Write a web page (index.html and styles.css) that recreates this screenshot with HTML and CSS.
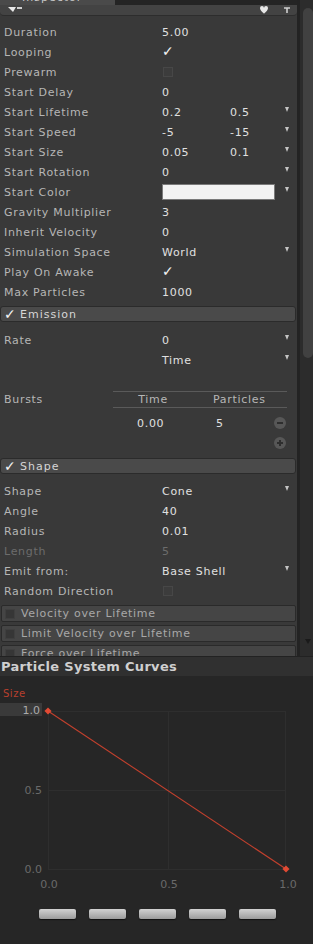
FILE: index.html
```html
<!DOCTYPE html>
<html>
<head>
<meta charset="utf-8">
<link rel="stylesheet" href="styles.css">
</head>
<body>
<div class="inspector">
  <div class="content">
    <div class="tabs"><div class="tab"><span class="tab-text">Inspector</span></div><div class="tab-gap"></div></div>
    <div class="toolbar">
      <svg class="tb-icon-left" width="16" height="8" viewBox="0 0 16 8"><path d="M1 1h8l-3 5z" fill="#e8e8e8"/><rect x="10" y="1" width="5" height="2" fill="#cfcfcf"/></svg>
      <div class="tb-right">
        <svg width="10" height="9" viewBox="0 0 10 9"><path d="M1 2a2 2 0 0 1 4 0a2 2 0 0 1 4 0c0 3-4 5-4 6c0-1-4-3-4-6z" fill="#e6e6e6"/></svg>
        <svg width="8" height="8" viewBox="0 0 8 8"><path d="M1 2h6M4 2v5" stroke="#cfcfcf" stroke-width="1.6"/></svg>
      </div>
    </div>
    <div class="rows">
      <div class="row"><span class="label">Duration</span><span class="val">5.00</span></div>
      <div class="row"><span class="label">Looping</span><span class="check">✓</span></div>
      <div class="row"><span class="label">Prewarm</span><span class="box"></span></div>
      <div class="row"><span class="label">Start Delay</span><span class="val">0</span></div>
      <div class="row"><span class="label">Start Lifetime</span><span class="val">0.2</span><span class="val2">0.5</span><span class="arrow"></span></div>
      <div class="row"><span class="label">Start Speed</span><span class="val">-5</span><span class="val2">-15</span><span class="arrow"></span></div>
      <div class="row"><span class="label">Start Size</span><span class="val">0.05</span><span class="val2">0.1</span><span class="arrow"></span></div>
      <div class="row"><span class="label">Start Rotation</span><span class="val">0</span><span class="arrow"></span></div>
      <div class="row"><span class="label">Start Color</span><span class="swatch"></span><span class="arrow"></span></div>
      <div class="row"><span class="label">Gravity Multiplier</span><span class="val">3</span></div>
      <div class="row"><span class="label">Inherit Velocity</span><span class="val">0</span></div>
      <div class="row"><span class="label">Simulation Space</span><span class="val">World</span><span class="arrow"></span></div>
      <div class="row"><span class="label">Play On Awake</span><span class="check">✓</span></div>
      <div class="row"><span class="label">Max Particles</span><span class="val">1000</span></div>

      <div class="module"><span class="mcheck">✓</span><span class="mtitle">Emission</span></div>
      <div class="section">
        <div class="row"><span class="label">Rate</span><span class="val">0</span><span class="arrow"></span></div>
        <div class="row"><span class="label"></span><span class="val">Time</span><span class="arrow"></span></div>
        <div class="bursts">
          <span class="blabel">Bursts</span>
          <div class="btable">
            <div class="bhead"><span class="bcol1">Time</span><span class="bcol2">Particles</span></div>
            <div class="brow"><span class="bval1">0.00</span><span class="bval2">5</span><span class="cbtn"><span class="minus"></span></span></div>
            <div class="brow"><span class="cbtn"><span class="minus"></span><span class="vbar"></span></span></div>
          </div>
        </div>
      </div>

      <div class="module shape-mod"><span class="mcheck">✓</span><span class="mtitle">Shape</span></div>
      <div class="section section-shape">
        <div class="row"><span class="label">Shape</span><span class="val">Cone</span><span class="arrow"></span></div>
        <div class="row"><span class="label">Angle</span><span class="val">40</span></div>
        <div class="row"><span class="label">Radius</span><span class="val">0.01</span></div>
        <div class="row disabled"><span class="label">Length</span><span class="val">5</span></div>
        <div class="row"><span class="label">Emit from:</span><span class="val wide">Base Shell</span><span class="arrow"></span></div>
        <div class="row"><span class="label">Random Direction</span><span class="box"></span></div>
      </div>

      <div class="collapsed first"><span class="cbox"></span><span class="ctitle">Velocity over Lifetime</span></div>
      <div class="collapsed"><span class="cbox"></span><span class="ctitle">Limit Velocity over Lifetime</span></div>
      <div class="collapsed"><span class="cbox"></span><span class="ctitle">Force over Lifetime</span></div>
    </div>
  </div>
  <div class="scroll">
    <div class="thumb"></div>
    <div class="sdown"></div>
  </div>
</div>

<div class="curves">
  <div class="ctitlebar">Particle System Curves</div>
  <div class="graph">
    <svg class="plot" width="313" height="220" viewBox="0 0 313 220">
      <g stroke="#2e2e2e" stroke-width="1">
        <line x1="48.5" y1="35" x2="48.5" y2="193"/>
        <line x1="168.5" y1="35" x2="168.5" y2="193"/>
        <line x1="285.5" y1="35" x2="285.5" y2="193"/>
        <line x1="48" y1="35.5" x2="286" y2="35.5"/>
        <line x1="48" y1="114.5" x2="286" y2="114.5"/>
        <line x1="48" y1="193.5" x2="286" y2="193.5"/>
      </g>
      <text x="3" y="21" class="t-size">Size</text>
      <rect x="0" y="27" width="42" height="13" fill="#3a3a3a"/>
      <text x="40" y="38" text-anchor="end" class="t-lbl hi">1.0</text>
      <text x="42" y="118" text-anchor="end" class="t-lbl">0.5</text>
      <text x="42" y="197" text-anchor="end" class="t-lbl">0.0</text>
      <text x="49" y="212" text-anchor="middle" class="t-lbl">0.0</text>
      <text x="169" y="212" text-anchor="middle" class="t-lbl">0.5</text>
      <text x="288" y="212" text-anchor="middle" class="t-lbl">1.0</text>
      <line x1="48" y1="35" x2="286" y2="193" stroke="#c3402d" stroke-width="1.1"/>
      <rect x="45.5" y="32.5" width="5" height="5" fill="#e24a34" transform="rotate(45 48 35)"/>
      <rect x="283.5" y="190.5" width="5" height="5" fill="#e24a34" transform="rotate(45 286 193)"/>
    </svg>
    <div class="presets">
      <span class="preset"></span><span class="preset"></span><span class="preset"></span><span class="preset"></span><span class="preset"></span>
    </div>
  </div>
</div>
</body>
</html>
```

FILE: styles.css
```css
* { box-sizing: border-box; }
html, body { margin: 0; padding: 0; }
body {
  width: 313px;
  height: 944px;
  overflow: hidden;
  background: #262626;
  font-family: "DejaVu Sans", "Noto Sans", sans-serif;
  font-size: 11px;
}

.inspector {
  display: flex;
  height: 656px;
  overflow: hidden;
  background: #393939;
}
.content { width: 297px; flex: none; }

.tabs { display: flex; height: 5px; overflow: hidden; background: #242424; }
.tab { width: 115px; background: #4a4a4a; overflow: hidden; }
.tab-text { display: block; margin-top: -8px; padding-left: 22px; color: #c8c8c8; font-size: 11px; letter-spacing: 1px; line-height: 12px; }
.tab-gap { flex: 1; }

.toolbar {
  height: 11px;
  display: flex;
  align-items: center;
  background: #434343;
  border-bottom: 1px solid #2d2d2d;
  border-radius: 0 0 4px 4px;
  padding-left: 7px;
}
.tb-icon-left { display: block; }
.tb-right { margin-left: auto; margin-right: 6px; display: flex; align-items: center; gap: 14px; }
.tb-right svg { display: block; }

.rows { padding-top: 6px; }

.row {
  display: flex;
  align-items: center;
  height: 20px;
  padding-left: 4px;
  color: #b6b6b6;
  letter-spacing: 0.7px;
  white-space: nowrap;
}
.label { width: 158px; flex: none; }
.val { width: 68px; flex: none; color: #e0e0e0; }
.val2 { width: 40px; flex: none; color: #e0e0e0; }
.val.wide { width: 120px; }
.row.disabled { color: #6c6c6c; }
.row.disabled .val { color: #6c6c6c; }
.arrow {
  margin-left: auto;
  margin-right: 8px;
  margin-top: -6px;
  width: 0;
  height: 0;
  border-left: 2.5px solid transparent;
  border-right: 2.5px solid transparent;
  border-top: 5px solid #c4c4c4;
}
.check { color: #f2f2f2; font-size: 14px; line-height: 14px; margin-top: -2px; }
.box {
  width: 10px; height: 10px; margin-left: 1px;
  background: #3c3c3c;
  border: 1px solid #474747;
}
.swatch {
  width: 113px; height: 16px;
  background: #f3f3f3;
  border: 1px solid #7a7a7a;
}

.module {
  margin-top: 4px;
  width: 296px;
  height: 16px;
  display: flex;
  align-items: center;
  background: #4a4a4a;
  border: 1px solid #2b2b2b;
  border-radius: 3px;
  padding-left: 3px;
  color: #d6d6d6;
  letter-spacing: 1px;
}
.mcheck { color: #f4f4f4; font-size: 14px; line-height: 14px; width: 16px; letter-spacing: 0; }
.shape-mod { margin-top: 5px; }

.section { padding-top: 8px; }
.section-shape { padding-top: 7px; }

.bursts { display: flex; align-items: flex-start; padding-top: 21px; padding-left: 4px; color: #b6b6b6; letter-spacing: 0.7px; }
.blabel { width: 109px; flex: none; line-height: 17px; }
.btable { width: 174px; flex: none; }
.bhead {
  height: 17px;
  display: flex;
  align-items: center;
  border-top: 1px solid #5a5a5a;
  border-bottom: 1px solid #5a5a5a;
}
.bcol1 { width: 80px; text-align: center; }
.bcol2 { padding-left: 20px; }
.brow { height: 20px; display: flex; align-items: center; }
.bhead + .brow { margin-top: 5px; }
.bval1 { width: 103px; padding-left: 24px; color: #e0e0e0; }
.bval2 { color: #e0e0e0; }
.cbtn {
  margin-left: auto;
  margin-right: 1px;
  width: 12px; height: 12px;
  border-radius: 50%;
  background: #575757;
  position: relative;
}
.minus { position: absolute; left: 3px; top: 5px; width: 6px; height: 2px; background: #2e2e2e; }
.vbar { position: absolute; left: 5px; top: 3px; width: 2px; height: 6px; background: #2e2e2e; }

.collapsed {
  margin-top: 3px;
  width: 295px;
  margin-left: 1px;
  height: 17px;
  display: flex;
  align-items: center;
  background: #454545;
  border: 1px solid #2a2a2a;
  border-radius: 2px;
  padding-left: 3px;
  color: #a8a8a8;
  letter-spacing: 0.7px;
  white-space: nowrap;
  overflow: hidden;
}
.collapsed.first { margin-top: 4px; }
.cbox { width: 10px; height: 10px; background: #363636; border: 1px solid #3f3f3f; margin-right: 6px; flex: none; }

.scroll {
  width: 16px;
  flex: none;
  background: #2c2c2c;
  border-left: 3px solid #232323;
  display: flex;
  flex-direction: column;
}
.thumb {
  margin-top: 8px;
  margin-left: 3px;
  width: 10px;
  height: 350px;
  background: #414141;
  border-radius: 5px;
}
.sdown {
  margin-top: auto;
  margin-bottom: 12px;
  margin-left: 5px;
  width: 0; height: 0;
  border-left: 3px solid transparent;
  border-right: 3px solid transparent;
  border-top: 5px solid #1a1a1a;
}

.curves { height: 288px; position: relative; }
.ctitlebar {
  height: 20px;
  line-height: 20px;
  background: #303030;
  border-top: 1px solid #222;
  color: #cfcfcf;
  font-weight: bold;
  font-size: 13px;
  letter-spacing: 0.3px;
  padding-left: 1px;
  white-space: nowrap;
}
.graph { background: #262626; height: 268px; }
.plot { display: block; }
.t-size { fill: #b8402e; font-size: 10px; font-family: "DejaVu Sans", sans-serif; letter-spacing: 0.5px; }
.t-lbl { fill: #6a6a6a; font-size: 11px; font-family: "DejaVu Sans", sans-serif; }
.t-lbl.hi { fill: #ababab; }

.presets { display: flex; gap: 13px; padding-left: 39px; padding-top: 13px; }
.preset {
  width: 37px; height: 10px;
  border-radius: 2px;
  background: linear-gradient(#d2d2d2, #9c9c9c);
  box-shadow: 0 1px 1px #111;
}
```
